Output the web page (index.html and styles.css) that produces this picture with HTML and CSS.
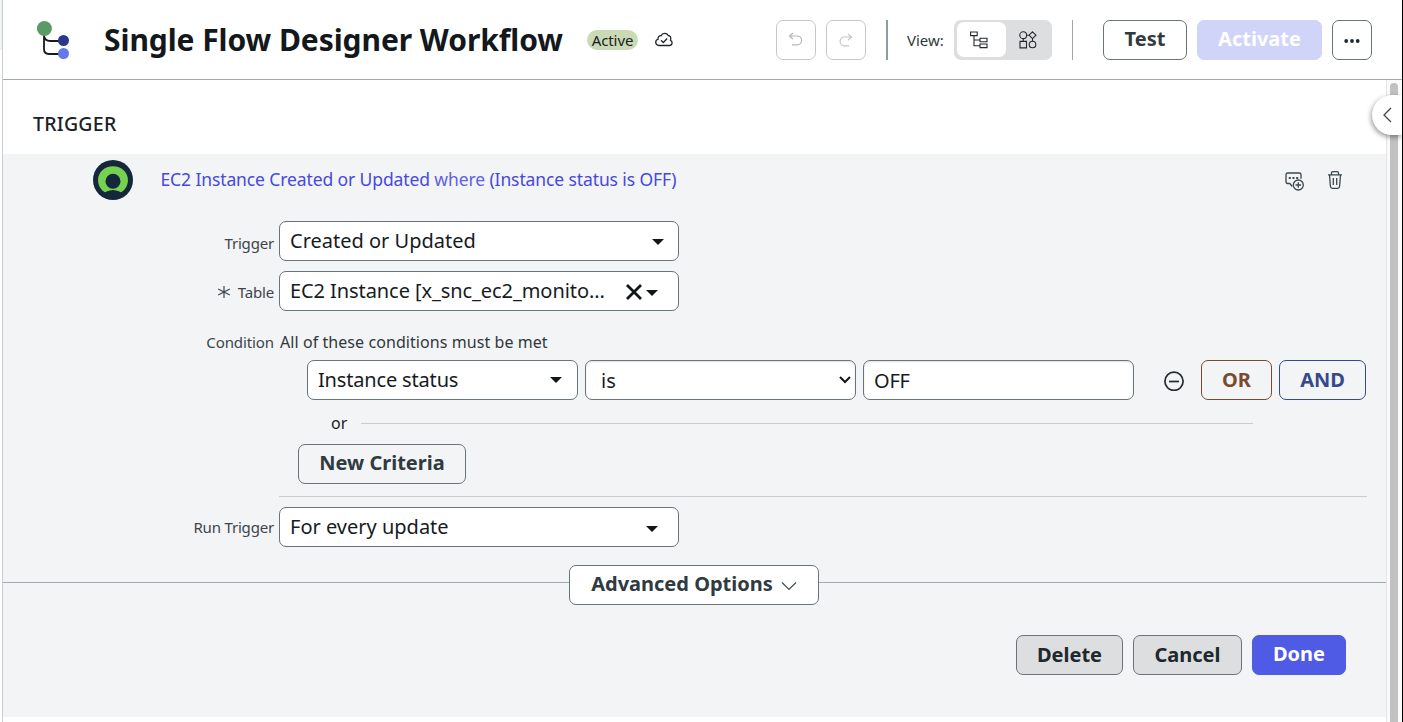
FILE: index.html
```html
<!DOCTYPE html>
<html lang="en">
<head>
<meta charset="utf-8">
<title>Single Flow Designer Workflow</title>
<link rel="stylesheet" href="styles.css">
</head>
<body>
<div class="app">
  <div class="gutter"></div>
  <div class="page">
    <header class="header">
      <svg class="logo" width="34" height="40" viewBox="0 0 34 40" fill="none">
        <path d="M8 12v17q0 5 5 5h12M8 16q1 5 6 5h11" stroke="#16191d" stroke-width="1.800"/>
        <circle cx="8.400" cy="8.500" r="7.500" fill="#589b66"/>
        <circle cx="27.500" cy="20.500" r="5.500" fill="#2b378c"/>
        <circle cx="27.500" cy="33.500" r="5.500" fill="#6379e8"/>
      </svg>
      <h1 class="title">Single Flow Designer Workflow</h1>
      <span class="badge">Active</span>
      <svg class="cloud" width="20" height="16" viewBox="0 0 20 16" fill="none" stroke="#1f272c" stroke-width="1.300">
        <path d="M5 13.500h10.500c3.200-.2 3.300-4.300 1-5.200 1-3.200-.6-4.800-2.300-4.800-1.600-3-5.900-2.600-7 .2-2.200-.3-3.600 1.500-3.100 3.400C.8 8.200.8 13 5 13.500z"/>
        <path d="M7 8.300l2.300 2.200 3.900-4"/>
      </svg>
      <div class="tools">
        <button class="btn square off"><svg width="16" height="16" viewBox="0 0 16 16" fill="none" stroke="#b4b8ba" stroke-width="1.200"><path d="M5 1L1.500 4 5 7.200M1.500 4h7.700a4.400 4.400 0 0 1 0 8.800H4"/></svg></button>
        <button class="btn square off"><svg width="16" height="16" viewBox="0 0 16 16" fill="none" stroke="#c3c6c8" stroke-width="1.200"><path d="M10 2l3.500 3-3.500 3.200M13.500 5H6.500a4.400 4.400 0 0 0 0 8.800H11"/></svg></button>
      </div>
      <i class="rule thick"></i>
      <span class="view">View:</span>
      <div class="toggle">
        <span class="seg on"><svg width="18" height="18" viewBox="0 0 18 18" fill="none" stroke="#24292c" stroke-width="1.100"><path d="M.6 1h6.600v3.600H.6zM10 7.200h7v3.600h-7zM10 13h7v3.600h-7zM4 4.600V14.800h6M4 9h6"/></svg></span>
        <span class="seg"><svg width="18" height="18" viewBox="0 0 18 18" fill="none" stroke="#24292c" stroke-width="1.100"><circle cx="4.200" cy="4.200" r="3.400"/><path d="M13.500.8l3.500 3.400-3.500 3.400L10 4.200zM7.600 4.200H10M4.200 7.600v2.800M13.500 7.600v2.600M1 10.400h6.500v6.500H1z"/><circle cx="13.500" cy="13.500" r="3.300"/></svg></span>
      </div>
      <i class="rule"></i>
      <button class="btn test">Test</button>
      <button class="btn activate">Activate</button>
      <button class="btn square more"><svg width="16" height="6" viewBox="0 0 16 6" fill="#20282d"><circle cx="2.200" cy="3" r="1.900"/><circle cx="8" cy="3" r="1.900"/><circle cx="13.700" cy="3" r="1.900"/></svg></button>
    </header>
    <main class="main">
      <div class="content">
        <h2 class="section">TRIGGER</h2>
        <section class="panel">
          <div class="summary">
            <svg class="avatar" width="40" height="40" viewBox="0 0 40 40">
              <circle cx="20" cy="20" r="20" fill="#14273b"/>
              <path d="M11 31.800A15 15 0 0 1 5 20.500C5 12 11.600 6.300 20 6.300S35 12 35 20.500a15 15 0 0 1-6 11.300q-1.500.8-2.600-.2-6.400-3.300-12.800 0-1.100 1-2.600.2z" fill="#75d14f"/>
              <circle cx="20" cy="21.200" r="7.500" fill="#14273b"/>
            </svg>
            <a class="link"><span class="link-part">EC2 Instance Created or Updated</span> where <span class="link-part">(Instance status is OFF)</span></a>
            <svg class="note" width="20" height="20" viewBox="0 0 20 20" fill="none" stroke="#3b474d" stroke-width="1.300">
              <path d="M7.300 15.500L4.800 12.500H2.700Q1 12.500 1 10.500V3.700Q1 2 2.700 2h11.600Q16 2 16 3.700v4.100"/>
              <circle cx="13.300" cy="14" r="5"/><path d="M13.300 11.200v5.600M10.500 14h5.600"/>
              <path d="M3.800 7h2M7.500 7h2M11.200 7h2" stroke-width="2"/>
            </svg>
            <svg class="trash" width="16" height="20" viewBox="0 0 16 20" fill="none" stroke="#3b474d" stroke-width="1.300">
              <path d="M1 4.800h14M4.500 4.800V3.200Q4.500 1.700 6 1.700h4q1.500 0 1.500 1.500v1.600M2.500 4.800l.9 11.500q.2 2 2 2h5.200q1.800 0 2-2l.9-11.500M6.300 8v7M9.700 8v7"/>
            </svg>
          </div>
          <div class="row">
            <label class="label low">Trigger</label>
            <div class="field wide"><span class="t-created">Created or Updated</span><i class="caret end"></i></div>
          </div>
          <div class="row">
            <label class="label table"><svg class="star" width="14" height="14" viewBox="0 0 14 14" stroke="#3c464c" stroke-width="1.200"><path d="M7 1v12M1.200 4l11.600 6M1.200 10l11.600-6"/></svg>Table</label>
            <div class="field wide"><span class="t-table">EC2 Instance [x_snc_ec2_monito...</span><svg class="clear" width="16" height="16" viewBox="0 0 16 16" stroke="#111619" stroke-width="2.800"><path d="M1 1l14 14M15 1L1 15"/></svg><i class="caret lower"></i></div>
          </div>
          <div class="row condition">
            <label class="label cond">Condition</label>
            <span class="all">All of these conditions must be met</span>
          </div>
          <div class="criteria">
            <div class="field third"><span class="t-status">Instance status</span><i class="caret"></i></div>
            <div class="field third inset"><span class="t-is">is</span><svg class="chev" width="12" height="8" viewBox="0 0 12 8" fill="none" stroke="#111619" stroke-width="2"><path d="M1 1l5 5 5-5"/></svg></div>
            <div class="field third inset"><span class="t-off">OFF</span></div>
            <svg class="minus" width="20" height="20" viewBox="0 0 20 20" fill="none" stroke="#222b30" stroke-width="1.700"><circle cx="10" cy="10.300" r="9.100"/><path d="M5 10.500h10"/></svg>
            <button class="btn or">OR</button>
            <button class="btn and">AND</button>
          </div>
          <div class="divider"><span class="or-text">or</span><i class="line"></i></div>
          <button class="btn new">New Criteria</button>
          <div class="separator"></div>
          <div class="row run">
            <label class="label rt">Run Trigger</label>
            <div class="field wide"><span class="t-every">For every update</span><i class="caret lower"></i></div>
          </div>
          <div class="advanced">
            <i class="adv-line before"></i>
            <button class="btn adv"><span>Advanced Options</span><svg width="16" height="9" viewBox="0 0 16 9" fill="none" stroke="#414b51" stroke-width="1.200"><path d="M1 .5l7 7 7-7"/></svg></button>
            <i class="adv-line"></i>
          </div>
          <div class="actions">
            <button class="btn grey delete">Delete</button>
            <button class="btn grey cancel">Cancel</button>
            <button class="btn done">Done</button>
          </div>
        </section>
      </div>
      <div class="scroll"><i class="thumb"></i></div>
      <button class="drawer"><svg width="9" height="16" viewBox="0 0 9 16" fill="none" stroke="#3c464c" stroke-width="1.300"><path d="M8 1L1 8l7 7"/></svg></button>
    </main>
  </div>
  <div class="edge"></div>
</div>
</body>
</html>
```
FILE: styles.css
```css
* { box-sizing: border-box; }
body { margin: 0; background: #fff; color: #1b2125; font-family: "Noto Sans", sans-serif; font-size: 20px; overflow: hidden; }
i { display: block; }
svg { display: block; flex: none; }
span, h1, h2, label, a { white-space: nowrap; }
.app { display: flex; width: 1403px; height: 722px; }
.gutter { width: 3px; flex: none; border-right: 1px solid #c8cfd1; background: linear-gradient(#f1f2f3 50px, #fff 50px); }
.edge { width: 1px; flex: none; background: #000; }
.page { width: 1399px; flex: none; display: flex; flex-direction: column; }

.header { height: 80px; flex: none; border-bottom: 1px solid #a3a8ac; display: flex; align-items: flex-start; padding: 20px 0 0 33px; }
.title { margin: 0 0 0 34px; width: 483px; font-size: 30px; line-height: 40px; font-weight: 700; letter-spacing: -.06px; }
.title { color: #13181c; }
.badge { margin-top: 10px; width: 51px; height: 20px; border-radius: 10px; background: #c9dab5; text-align: center; font-size: 15px; line-height: 21px; letter-spacing: -.1px; }
.cloud { margin: 12px 0 0 16px; }
.tools { display: flex; gap: 10px; margin-left: 102px; }
.btn { font: 700 20px/36px "Noto Sans", sans-serif; height: 40px; border: 1px solid #68737a; border-radius: 7px; background: transparent; color: #2f3a41; padding: 0; flex: none; display: flex; justify-content: center; white-space: nowrap; }
.square { width: 40px; align-items: center; }
.off { border-color: #c6c9ca; }
.rule { width: 1px; height: 40px; background: #a0a7ac; margin-left: 20px; }
.rule.thick { width: 2px; background: #929ba0; }
.view { margin-left: 19px; width: 47px; font-size: 15px; line-height: 41px; color: #2e383e; }
.toggle { width: 98px; height: 40px; border-radius: 7px; background: #dddee0; display: flex; padding: 2px 3px 3px; }
.seg { width: 49px; display: flex; align-items: center; justify-content: center; }
.seg.on { background: #fff; border-radius: 7px; padding-right: 5px; padding-top: 1px; }
.seg:last-child { width: 43px; }
.test { width: 84px; margin-left: 30px; background: #fff; }
.activate { width: 125px; margin-left: 10px; border-color: #cfd4f8; background: #cfd4f8; color: #fff; }
.more { margin-left: 10px; padding-top: 2px; }

.main { display: flex; flex: 1; position: relative; }
.content { width: 1383px; }
.section { margin: 0; height: 74px; padding: 30px 0 0 30px; font-size: 19.500px; line-height: 28px; font-weight: 500; letter-spacing: .25px; }
.scroll { width: 16px; border-left: 1px solid #e4e5e6; background: #fafafa; padding: 3px 4px 0 3px; display: flex; }
.thumb { width: 8px; border-radius: 4px 4px 0 0; background: #c1c1c1; }
.drawer { position: absolute; right: 0; top: 15px; width: 30px; height: 40px; border: 0; padding: 0; border-radius: 20px 0 0 20px; background: #fff; box-shadow: -1px 2px 5px rgba(0,0,0,.4); clip-path: inset(-10px 0 -10px -10px); display: flex; align-items: center; justify-content: center; }

.panel { height: 563px; background: #f3f4f6; }
.summary { display: flex; height: 67px; padding: 6px 0 0 90px; }
.link { margin-left: 27.500px; width: 1124.500px; font-size: 17.500px; line-height: 39px; letter-spacing: -.11px; color: #5c62e4; }
.link-part { color: #4549df; }
.note { margin-top: 11px; }
.trash { margin: 10px 0 0 22px; }
.row { display: flex; margin-bottom: 10px; }
.label { width: 271px; margin-right: 5px; display: flex; justify-content: flex-end; align-items: center; font-size: 15px; line-height: 20px; letter-spacing: -.18px; color: #3b454b; }
.low { padding-top: 4px; }
.table { padding-top: 2px; }
.cond { padding-bottom: 2px; letter-spacing: -.1px; }
.star { margin-right: 7px; }
.field { height: 40px; border: 1px solid #68737a; border-radius: 7px; background: #fff; display: flex; align-items: flex-start; justify-content: space-between; padding: 0 20px 0 10px; line-height: 37px; flex: none; color: #161b1f; }
.wide { width: 400px; }
.t-table { letter-spacing: -.08px; }
.t-status { letter-spacing: -.17px; }
.t-off { letter-spacing: -.2px; }
.caret { width: 0; height: 0; border: 6px solid transparent; border-top-color: #111619; border-bottom: 0; align-self: center; }
.caret.end { margin-right: -6px; margin-top: 2px; }
.caret.lower { margin-top: 4px; }
.clear { margin: 12px 4px 0 auto; }
.condition { height: 19px; margin-top: 22px; margin-bottom: 8px; }
.all { font-size: 16px; line-height: 18px; margin-left: 1px; letter-spacing: .07px; color: #30383d; }
.criteria { display: flex; padding-left: 304px; }
.third { width: 271px; margin-right: 7px; padding-right: 15px; }
.inset { box-shadow: inset 0 1px 2px rgba(0,0,0,.12); line-height: 40px; padding-right: 4px; }
.t-is { padding-left: 5px; }
.chev { align-self: center; }
.minus { margin: 11px 17px 0 23px; }
.or, .and { line-height: 38px; }
.or { width: 71px; border-color: #7a4a30; color: #7a4a30; margin-right: 7px; }
.and { width: 87px; border-color: #354a8b; color: #354a8b; }
.divider { display: flex; align-items: center; height: 44px; padding-left: 328px; font-size: 16px; }
.or-text { width: 30px; margin-top: 2px; }
.line { width: 892px; height: 1px; background: #c8cccf; margin-top: 3px; }
.new { width: 168px; margin-left: 295px; }
.separator { margin: 12px 0 10px 276px; width: 1088px; height: 1px; background: #c8cccf; }
.run { margin-bottom: 18px; }
.advanced { display: flex; }
.adv-line { flex: 1; height: 1px; margin-top: 17px; background: #a0a9af; }
.adv-line.before { flex: none; width: 566px; }
.adv { width: 250px; background: #fff; gap: 8px; }
.adv svg { margin-top: 16px; }
.actions { display: flex; justify-content: flex-end; gap: 10px; padding: 30px 40px 0 0; }
.grey { background: #dddee0; color: #20282d; line-height: 38px; }
.delete { width: 107px; }
.cancel { width: 109px; }
.done { width: 94px; background: #4f5be5; border-color: #4f5be5; color: #fff; }
```
